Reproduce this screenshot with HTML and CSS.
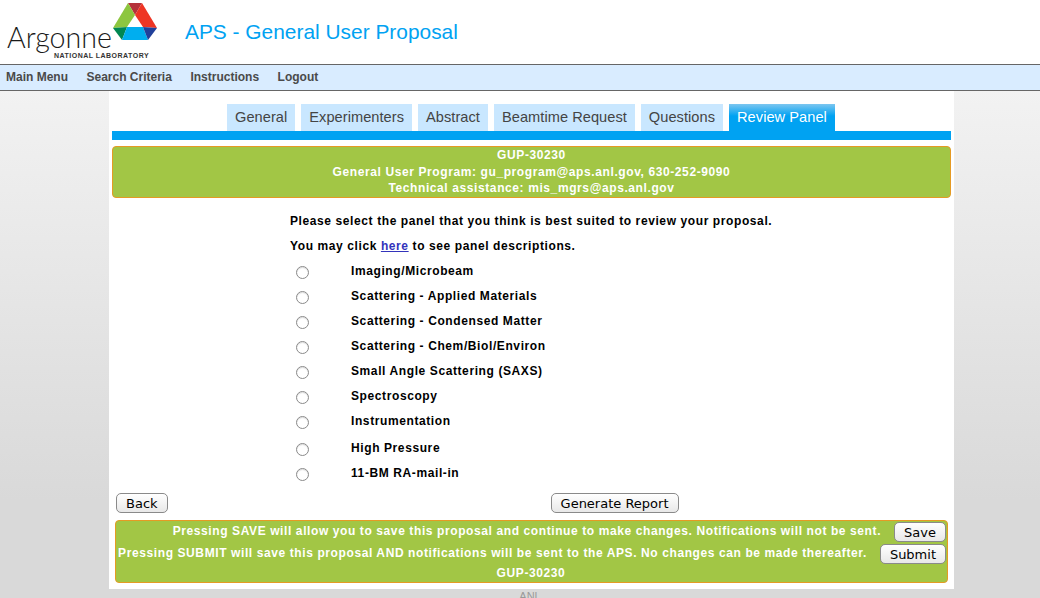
FILE: index.html
```html
<html>
<head>
    <title>APS - General User Proposal</title>
    <link rel="stylesheet" href="styles.css">
</head>
<body>
    <!-- Header -->
    <div class="header">
        <svg class="logo" width="170" height="64" viewBox="0 0 170 64">
            <polygon points="128,3 142,3 135,15" fill="#b5323a"/>
            <polygon points="128,3 135,15 127,27 113,28" fill="#8dc63f"/>
            <polygon points="142,3 157,28 143,27 135,15" fill="#ee3524"/>
            <polygon points="113,28 127,27 122,40" fill="#008752"/>
            <polygon points="127,27 143,27 148,40 122,40" fill="#00aeef"/>
            <polygon points="143,27 157,28 148,40" fill="#21409a"/>
            <text class="logo-name" x="7" y="48">Argonne</text>
            <text class="logo-lab" x="54" y="58">NATIONAL LABORATORY</text>
        </svg>
        <div class="title">APS - General User Proposal</div>
    </div>

    <!-- Menu -->
    <ul class="menu">
        <li><a href="#">Main Menu</a></li>
        <li><a href="#">Search Criteria</a></li>
        <li><a href="#">Instructions</a></li>
        <li><a href="#">Logout</a></li>
    </ul>

    <div class="content">
        <!-- Tabs -->
        <div class="tabs">
            <a class="tab" href="#">General</a>
            <a class="tab" href="#">Experimenters</a>
            <a class="tab" href="#">Abstract</a>
            <a class="tab" href="#">Beamtime Request</a>
            <a class="tab" href="#">Questions</a>
            <a class="tab active" href="#">Review Panel</a>
        </div>
        <div class="tab-bar"></div>

        <div class="notice">
            <div>GUP-30230</div>
            <div>General User Program: gu_program@aps.anl.gov, 630-252-9090</div>
            <div>Technical assistance: mis_mgrs@aps.anl.gov</div>
        </div>

        <!-- Panel selection -->
        <form class="panel-form">
            <p class="intro">Please select the panel that you think is best suited to review your proposal.</p>
            <p class="intro intro-last">You may click <a href="#">here</a> to see panel descriptions.</p>
            <label class="panel"><input type="radio" name="panel"><span>Imaging/Microbeam</span></label>
            <label class="panel"><input type="radio" name="panel"><span>Scattering - Applied Materials</span></label>
            <label class="panel"><input type="radio" name="panel"><span>Scattering - Condensed Matter</span></label>
            <label class="panel"><input type="radio" name="panel"><span>Scattering - Chem/Biol/Environ</span></label>
            <label class="panel"><input type="radio" name="panel"><span>Small Angle Scattering (SAXS)</span></label>
            <label class="panel"><input type="radio" name="panel"><span>Spectroscopy</span></label>
            <label class="panel"><input type="radio" name="panel"><span>Instrumentation</span></label>
            <label class="panel panel-gap"><input type="radio" name="panel"><span>High Pressure</span></label>
            <label class="panel"><input type="radio" name="panel"><span>11-BM RA-mail-in</span></label>
        </form>

        <div class="actions">
            <button class="btn" type="button">Back</button>
            <button class="btn" type="button">Generate Report</button>
        </div>

        <div class="submit-box">
            <div class="submit-row">
                <span>Pressing SAVE will allow you to save this proposal and continue to make changes. Notifications will not be sent.</span>
                <button class="btn" type="button">Save</button>
            </div>
            <div class="submit-row">
                <span>Pressing SUBMIT will save this proposal AND notifications will be sent to the APS. No changes can be made thereafter.</span>
                <button class="btn" type="button">Submit</button>
            </div>
            <div class="submit-id">GUP-30230</div>
        </div>
    </div>

    <div class="footer">ANL</div>
</body>
</html>
```

FILE: styles.css
```css
html {
    overflow: hidden;
}

body {
    margin: 0;
    font-family: 'Liberation Sans', Arial, sans-serif;
    color: #000;
    background: linear-gradient(#f2f2f2 91px, #d9d9d9 500px);
    min-height: 598px;
}

.header {
    height: 64px;
    background-color: #fff;
    display: flex;
    align-items: center;
}

.logo {
    flex: none;
    width: 170px;
    height: 64px;
}

.logo-name {
    font-family: 'Lato', sans-serif;
    font-size: 28.6px;
    font-weight: 300;
    fill: #1a1a1a;
}

.logo-lab {
    font-family: 'Liberation Sans', sans-serif;
    font-size: 7px;
    font-weight: bold;
    letter-spacing: 0.48px;
    fill: #333;
}

.title {
    margin-left: 15px;
    color: #00a2f2;
    font-size: 20.9px;
}

.menu {
    margin: 0;
    padding: 0 0 3px 6px;
    list-style: none;
    height: 22px;
    display: flex;
    align-items: center;
    gap: 18.5px;
    background-color: #d9ecff;
    border-top: 1px solid #666;
    border-bottom: 1px solid #666;
}

.menu a {
    color: #4a4a4a;
    font-size: 12px;
    font-weight: bold;
    text-decoration: none;
}

.content {
    width: 845px;
    height: 498px;
    margin-left: 109px;
    padding: 13px 3px 0;
    box-sizing: border-box;
    background-color: #fff;
}

.tabs {
    display: flex;
    gap: 6px;
    padding-left: 115px;
}

.tab {
    height: 27px;
    line-height: 27px;
    padding: 0 8px;
    background-color: #c9e7ff;
    color: #444;
    font-size: 14.6px;
    letter-spacing: 0.05px;
    text-decoration: none;
}

.tab.active {
    background: linear-gradient(#7cc6f0, #00a2f2 12px);
    color: #fff;
}

.tab-bar {
    height: 9px;
    background-color: #00a2f2;
}

.notice {
    margin-top: 6px;
    height: 52px;
    box-sizing: border-box;
    border: 1px solid #e59a24;
    border-radius: 4px;
    background-color: #a2c645;
    color: #fff;
    font-size: 12px;
    font-weight: bold;
    letter-spacing: 0.6px;
    line-height: 16.5px;
    text-align: center;
}

.panel-form {
    margin: 0;
    padding: 13px 0 0 178px;
    font-size: 12px;
    font-weight: bold;
    letter-spacing: 0.6px;
}

.panel-form a {
    color: #3333bb;
}

.intro {
    margin: 0;
    height: 25px;
    line-height: 20px;
}

.intro-last {
    height: 22px;
}

.panel {
    display: flex;
    align-items: center;
    height: 25px;
}

.panel-gap {
    margin-top: 2px;
}

.panel input {
    appearance: none;
    box-sizing: border-box;
    margin: 3px 0 0 6px;
    width: 13px;
    height: 13px;
    border: 1px solid #8a8a8a;
    border-radius: 50%;
    background-color: #fff;
    box-shadow: inset 0 1px 1px #ddd;
}

.panel span {
    margin-left: 42px;
}

.actions {
    display: flex;
    gap: 383px;
    padding: 8px 0 0 4px;
}

.btn {
    height: 20px;
    padding: 0 9px;
    border: 1px solid #8a8a8a;
    border-radius: 5px;
    background: linear-gradient(#fff, #e8e8e8);
    color: #000;
    font-family: 'DejaVu Sans', Verdana, sans-serif;
    font-size: 13px;
}

.submit-box {
    margin: 7px 3px 0;
    height: 63px;
    box-sizing: border-box;
    padding: 1px 1px 0 0;
    border: 1px solid #e59a24;
    border-radius: 4px;
    background-color: #a2c645;
    color: #fff;
    font-size: 12px;
    font-weight: bold;
    letter-spacing: 0.6px;
}

.submit-row {
    display: flex;
    justify-content: flex-end;
    align-items: center;
    gap: 13px;
    height: 20px;
    margin-bottom: 2px;
    white-space: nowrap;
}

.submit-row span {
    padding-bottom: 2px;
}

.submit-id {
    text-align: center;
}

.footer {
    margin-top: 1px;
    color: #999;
    font-size: 11px;
    text-align: center;
    width: 1060px;
}
```
